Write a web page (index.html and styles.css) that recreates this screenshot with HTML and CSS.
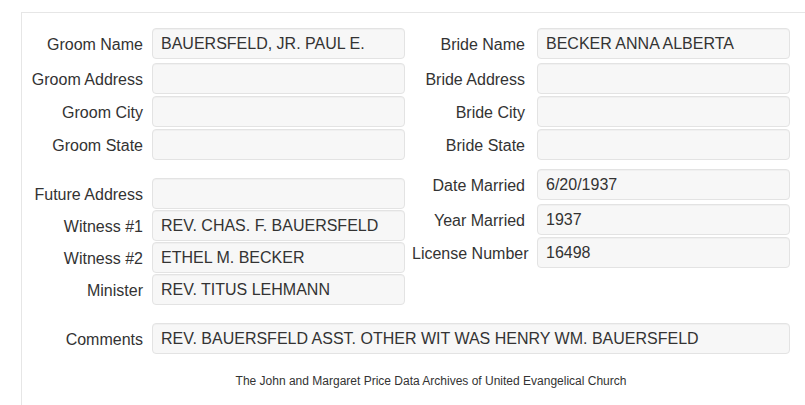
FILE: index.html
```html
<!DOCTYPE html>
<html>
<head>
<meta charset="utf-8">
<link rel="stylesheet" href="styles.css">
</head>
<body>
<div class="panel">
  <div class="columns">
    <div class="col col-left">
      <div class="group">
        <div class="row"><div class="label">Groom Name</div><div class="well">BAUERSFELD, JR. PAUL E.</div></div>
        <div class="row"><div class="label">Groom Address</div><div class="well"></div></div>
        <div class="row"><div class="label">Groom City</div><div class="well"></div></div>
        <div class="row"><div class="label">Groom State</div><div class="well"></div></div>
      </div>
      <div class="group group-left2">
        <div class="row tight"><div class="label">Future Address</div><div class="well"></div></div>
        <div class="row tight"><div class="label">Witness #1</div><div class="well">REV. CHAS. F. BAUERSFELD</div></div>
        <div class="row tight"><div class="label">Witness #2</div><div class="well">ETHEL M. BECKER</div></div>
        <div class="row tight"><div class="label">Minister</div><div class="well">REV. TITUS LEHMANN</div></div>
      </div>
    </div>
    <div class="col col-right">
      <div class="group">
        <div class="row"><div class="label">Bride Name</div><div class="well">BECKER ANNA ALBERTA</div></div>
        <div class="row"><div class="label">Bride Address</div><div class="well"></div></div>
        <div class="row"><div class="label">Bride City</div><div class="well"></div></div>
        <div class="row"><div class="label">Bride State</div><div class="well"></div></div>
      </div>
      <div class="group group-right2">
        <div class="row"><div class="label">Date Married</div><div class="well">6/20/1937</div></div>
        <div class="row"><div class="label">Year Married</div><div class="well">1937</div></div>
        <div class="row"><div class="label">License Number</div><div class="well">16498</div></div>
      </div>
    </div>
  </div>
  <div class="row comments"><div class="label">Comments</div><div class="well wide">REV. BAUERSFELD ASST. OTHER WIT WAS HENRY WM. BAUERSFELD</div></div>
  <div class="footer">The John and Margaret Price Data Archives of United Evangelical Church</div>
</div>
</body>
</html>
```

FILE: styles.css
```css
html, body {
  margin: 0;
  padding: 0;
  background: #ffffff;
  overflow: hidden;
}
body {
  font-family: "Liberation Sans", Arial, sans-serif;
  font-size: 16px;
  color: #333333;
}
.panel {
  margin-top: 12px;
  margin-left: 21px;
  width: 818px;
  border-top: 1px solid #e6e6e6;
  border-left: 1px solid #e6e6e6;
  padding-top: 15px;
  height: 377px;
}
.columns {
  display: flex;
}
.col-left {
  width: 383px;
}
.col-left .label {
  width: 121px;
  margin-right: 9px;
}
.col-right {
  padding-left: 7px;
}
.col-right .label {
  width: 113px;
  margin-right: 12px;
}
.group {
  display: flex;
  flex-direction: column;
}
.row {
  display: flex;
  align-items: center;
  margin-bottom: 2px;
}
.group > .row:first-child {
  margin-bottom: 4px;
}
.group > .row.tight {
  margin-bottom: 1px;
}
.group-left2 {
  margin-top: 16px;
}
.group-right2 {
  margin-top: 7px;
}
.label {
  text-align: right;
  white-space: nowrap;
  line-height: 18px;
  padding-top: 2px;
}
.well {
  box-sizing: border-box;
  width: 253px;
  height: 31px;
  padding: 0 8px;
  line-height: 29px;
  background: #f7f7f7;
  border: 1px solid #e3e3e3;
  border-radius: 4px;
  box-shadow: inset 0 1px 1px rgba(0, 0, 0, 0.03);
  white-space: nowrap;
  overflow: hidden;
}
.comments {
  margin-top: 17px;
}
.comments .label {
  width: 121px;
  margin-right: 9px;
}
.well.wide {
  width: 638px;
}
.footer {
  margin-top: 19px;
  font-size: 12px;
  line-height: 17px;
  text-align: center;
  color: #333333;
}
```
